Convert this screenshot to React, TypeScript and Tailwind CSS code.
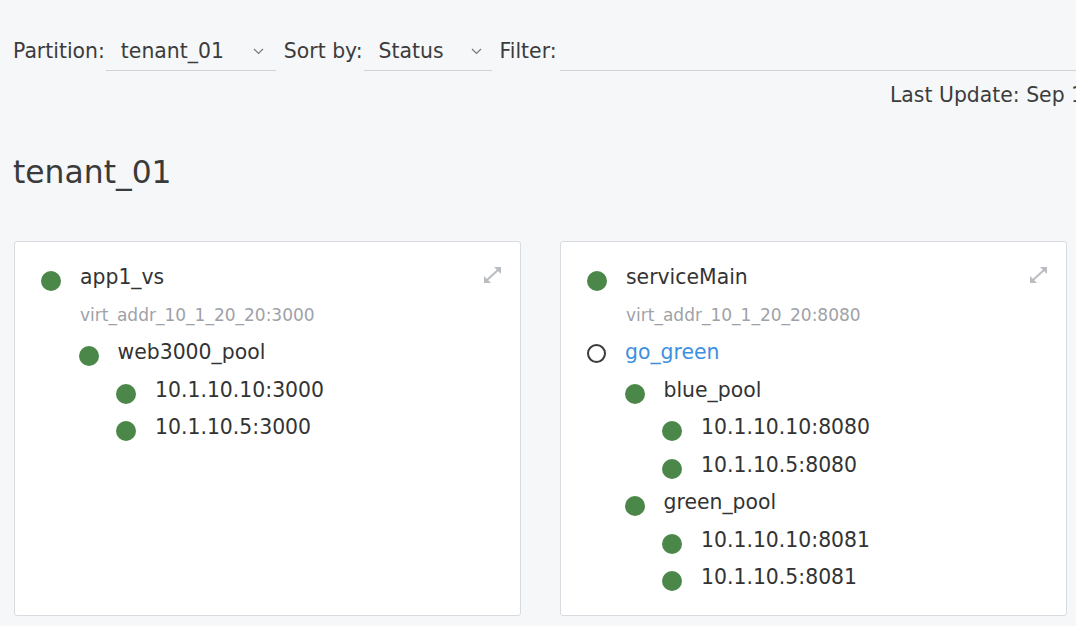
import React from "react";

type Row =
  | { kind: "node"; level: 0 | 1 | 2; text: string; status: "green" | "empty"; link?: boolean; expand?: boolean }
  | { kind: "sub"; text: string };

const indent = ["pl-0", "pl-[37.5px]", "pl-[75px]"];

function Chevron() {
  return (
    <svg width="11" height="7" viewBox="0 0 11 7" className="shrink-0">
      <polyline points="1,1 5.5,5.5 10,1" fill="none" stroke="#777" strokeWidth="1.2" />
    </svg>
  );
}

function ExpandIcon() {
  return (
    <svg width="19" height="18" viewBox="0 0 19 18" className="shrink-0">
      <line x1="4" y1="14" x2="15" y2="4" stroke="#b9bdc1" strokeWidth="2" />
      <polygon points="18,1 18,8 11,1" fill="#b9bdc1" />
      <polygon points="1,17 1,10 8,17" fill="#b9bdc1" />
    </svg>
  );
}

function Card({ rows }: { rows: Row[] }) {
  return (
    <div className="bg-white border border-[#d8dbdf] rounded-[3px] pt-[17px] pb-[18px] pl-[26px] pr-[18px]">
      {rows.map((r, i) =>
        r.kind === "sub" ? (
          <div key={i} className="h-[37.5px] flex items-center pl-[39px] text-[17px] text-[#9ea2a7] whitespace-nowrap">
            {r.text}
          </div>
        ) : (
          <div key={i} className={`h-[37.5px] flex items-center ${indent[r.level]}`}>
            {r.status === "green" ? (
              <span className="w-[20px] h-[20px] rounded-full bg-[#4a8748] mt-[7px] shrink-0" />
            ) : (
              <span className="w-[19px] h-[19px] rounded-full border-2 border-[#3a3a3a] mt-[2px] shrink-0" />
            )}
            <span
              className={`ml-[19px] text-[20.4px] whitespace-nowrap ${r.link ? "text-[#3d8fe0]" : "text-[#333]"}`}
            >
              {r.text}
            </span>
            {r.expand && (
              <span className="ml-auto mb-[6px]">
                <ExpandIcon />
              </span>
            )}
          </div>
        )
      )}
    </div>
  );
}

export default function App() {
  const card1: Row[] = [
    { kind: "node", level: 0, text: "app1_vs", status: "green", expand: true },
    { kind: "sub", text: "virt_addr_10_1_20_20:3000" },
    { kind: "node", level: 1, text: "web3000_pool", status: "green" },
    { kind: "node", level: 2, text: "10.1.10.10:3000", status: "green" },
    { kind: "node", level: 2, text: "10.1.10.5:3000", status: "green" },
  ];
  const card2: Row[] = [
    { kind: "node", level: 0, text: "serviceMain", status: "green", expand: true },
    { kind: "sub", text: "virt_addr_10_1_20_20:8080" },
    { kind: "node", level: 0, text: "go_green", status: "empty", link: true },
    { kind: "node", level: 1, text: "blue_pool", status: "green" },
    { kind: "node", level: 2, text: "10.1.10.10:8080", status: "green" },
    { kind: "node", level: 2, text: "10.1.10.5:8080", status: "green" },
    { kind: "node", level: 1, text: "green_pool", status: "green" },
    { kind: "node", level: 2, text: "10.1.10.10:8081", status: "green" },
    { kind: "node", level: 2, text: "10.1.10.5:8081", status: "green" },
  ];

  return (
    <div
      className="w-[1076px] h-[626px] overflow-hidden bg-[#f6f7f9] text-[#333]"
      style={{ fontFamily: '"DejaVu Sans", sans-serif' }}
    >
      <div className="w-[1300px] pl-[13px]">
        <div className="flex items-center h-[39px] mt-[32px] text-[20.4px] text-[#3c3c3c]">
          <span className="whitespace-nowrap">Partition:</span>
          <div className="ml-[1px] w-[170px] h-full flex items-center justify-between pl-[15px] pr-[12px] border-b border-[#cfd2d6]">
            <span>tenant_01</span>
            <Chevron />
          </div>
          <span className="ml-[8px] whitespace-nowrap">Sort by:</span>
          <div className="ml-[1px] w-[128px] h-full flex items-center justify-between pl-[15px] pr-[10px] border-b border-[#cfd2d6]">
            <span>Status</span>
            <Chevron />
          </div>
          <span className="ml-[8px] whitespace-nowrap">Filter:</span>
          <div className="ml-[3px] flex-1 h-full border-b border-[#cfd2d6]" />
        </div>
        <div className="mt-[11px] h-[26px] leading-[26px] text-[20.4px] text-[#3c3c3c] pl-[877px] whitespace-nowrap">
          Last Update: Sep 13, 2019 10:42:17 AM
        </div>
        <h1 className="mt-[46px] h-[36px] leading-[36px] text-[31.4px] text-[#3a3a3a] font-normal">tenant_01</h1>
        <div className="mt-[51px] grid grid-cols-[507px_507px] gap-x-[39px] pl-[1px] items-stretch">
          <Card rows={card1} />
          <Card rows={card2} />
        </div>
      </div>
    </div>
  );
}
